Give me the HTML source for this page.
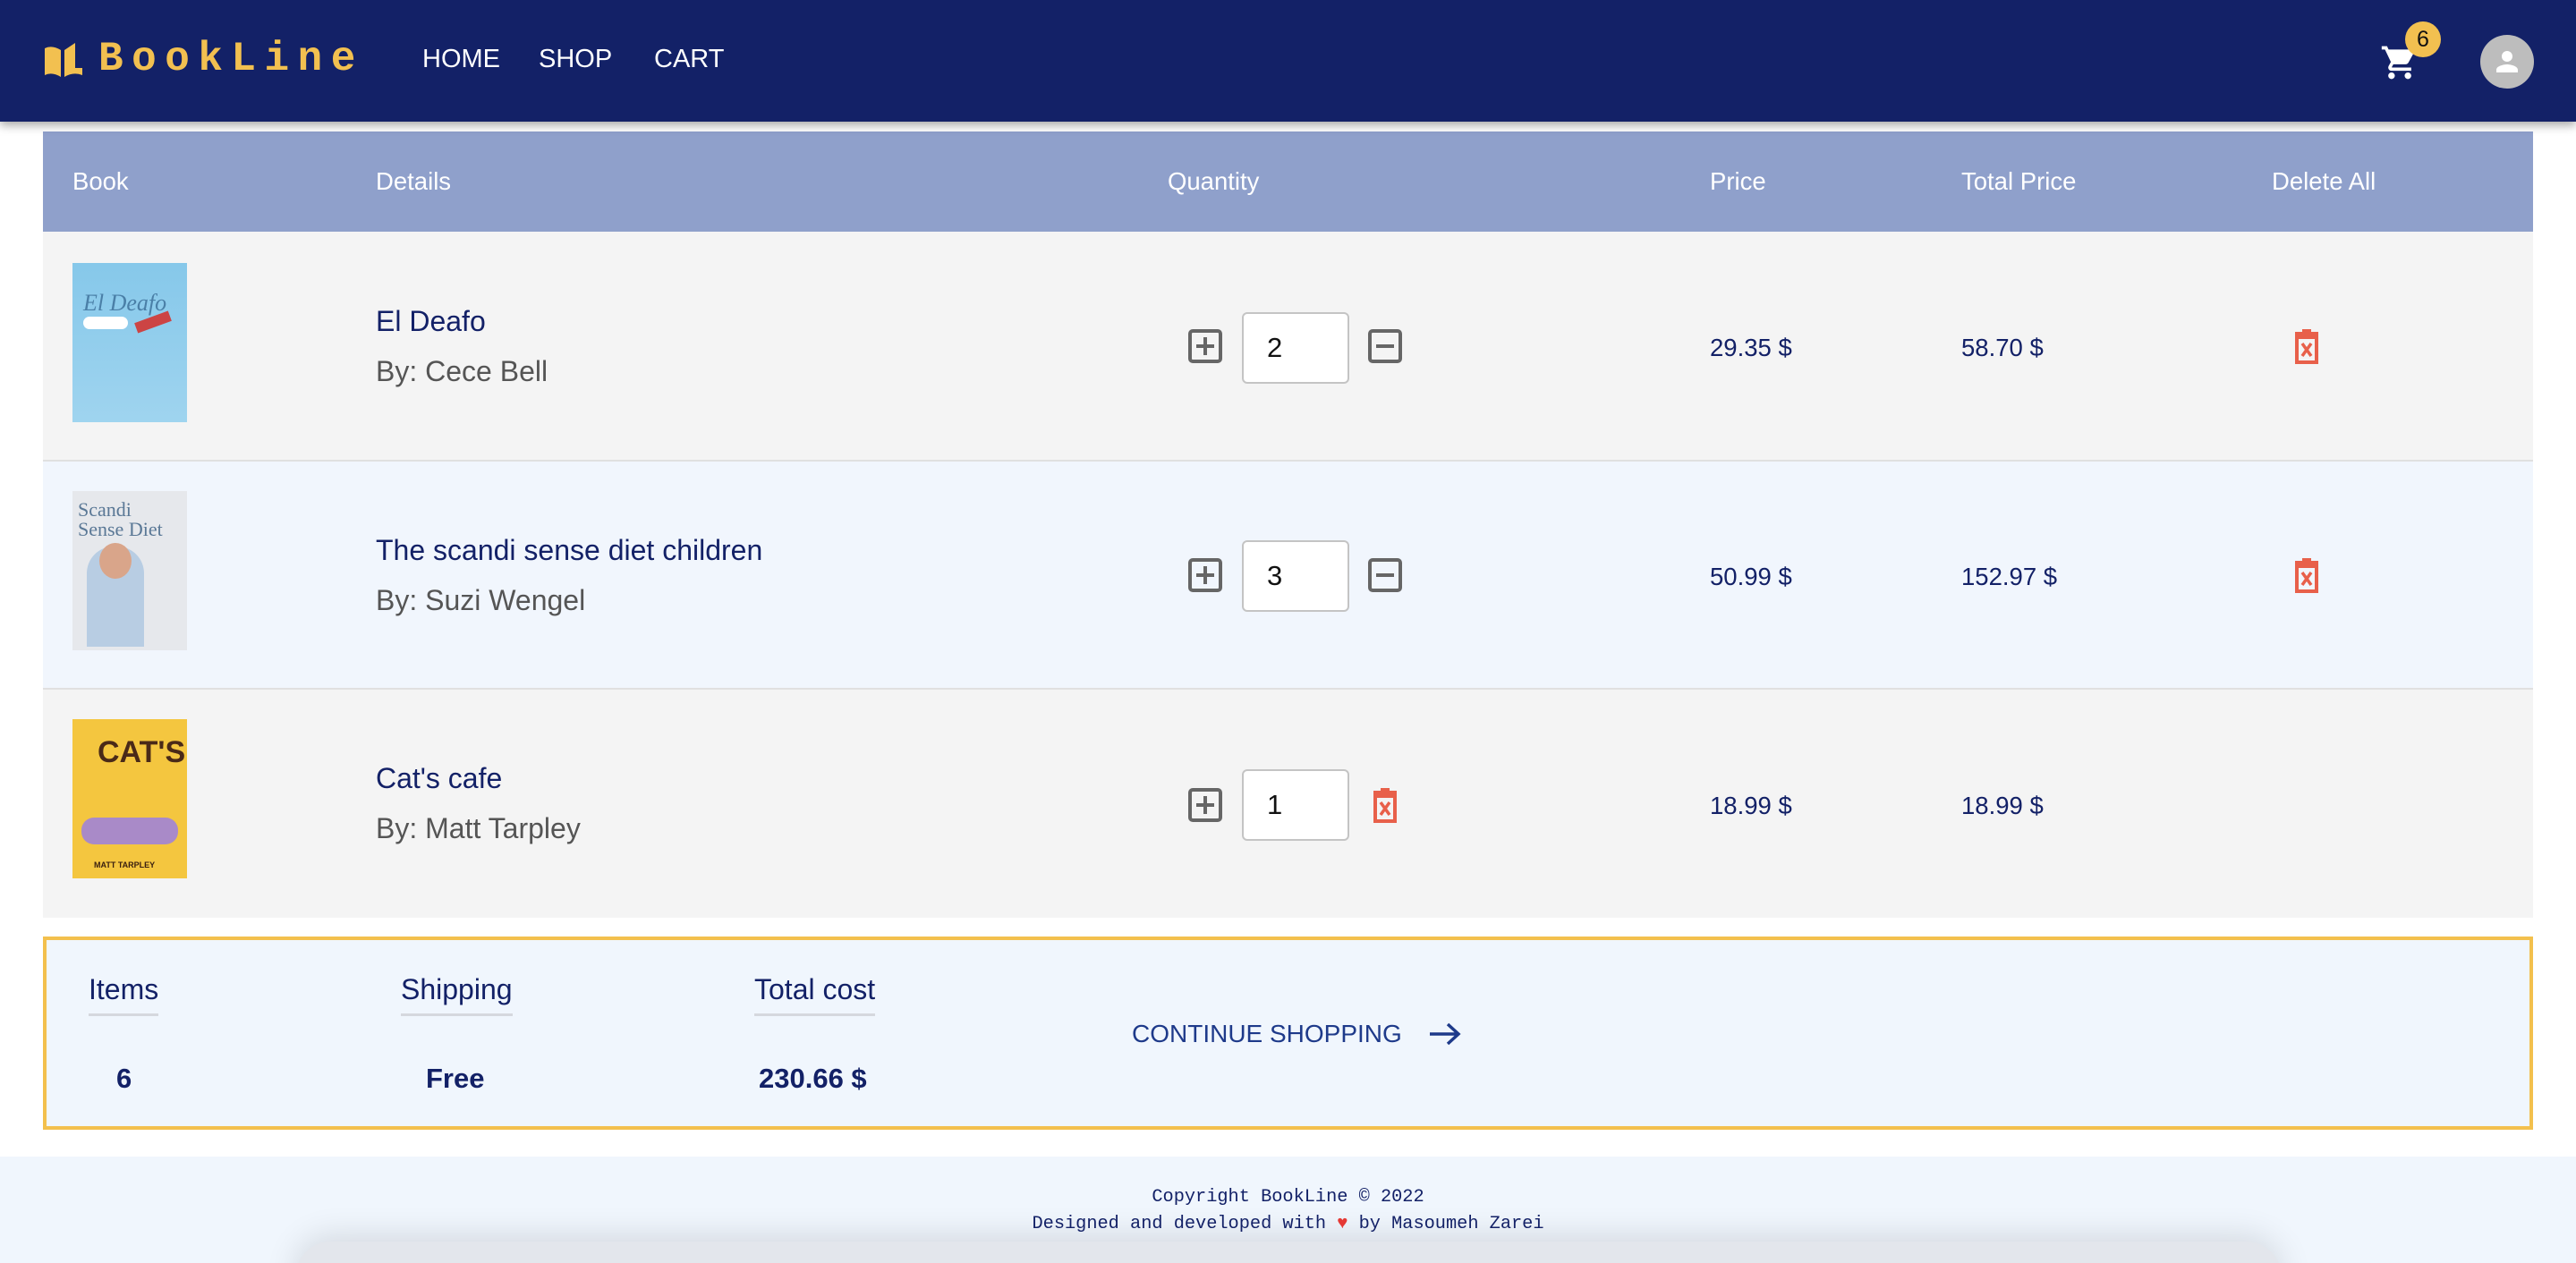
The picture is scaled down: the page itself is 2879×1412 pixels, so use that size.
<!DOCTYPE html>
<html><head><meta charset="utf-8"><style>
*{margin:0;padding:0;box-sizing:border-box}
html,body{width:2879px;height:1412px;overflow:hidden}
body{background:#fff;font-family:"Liberation Sans",sans-serif;position:relative}
.abs{position:absolute}
.nav{left:0;top:0;width:2879px;height:136px;background:#132167;box-shadow:0 4px 10px rgba(0,0,0,.35);z-index:2}
.logo{left:110px;top:40px;font-family:"Liberation Mono",monospace;font-weight:bold;font-size:46px;color:#f2c050;letter-spacing:9.5px}
.link{top:50px;color:#fff;font-size:29px}
.hdr{left:48px;top:147px;width:2783px;height:112px;background:#8fa0cb}
.hdr span{position:absolute;top:40px;color:#fff;font-size:27.5px}
.row{left:48px;width:2783px;border-bottom:2px solid #e0e0e0}
.title{font-size:32px;color:#132167}
.auth{font-size:32px;color:#555}
.price{font-size:27.5px;color:#132167}
.qin{width:120px;height:80px;border:2px solid #c4c4c4;border-radius:6px;background:#fff;font-size:31px;padding:20px 0 0 26px;color:#111}
.sum{left:48px;top:1047px;width:2783px;height:216px;border:4px solid #f3c04d;background:#f0f6fd}
.lab{font-size:32px;color:#132167;top:1088px;padding-bottom:8px;border-bottom:3px solid #d5d8de}
.val{font-size:31px;font-weight:bold;color:#132167;top:1188px}
.foot{left:0;top:1293px;width:2879px;height:119px;background:#f0f6fd;text-align:center;font-family:"Liberation Mono",monospace;font-size:20.3px;color:#132167;overflow:hidden}
</style></head><body>
<div class="abs nav">
 <svg class="abs" style="left:48px;top:46px" width="46" height="42" viewBox="0 0 46 42"><path d="M2 8 Q10 4 20 10 L20 40 Q10 34 2 38Z" fill="#f2c050"/><path d="M24 10 L36 2 L36 30 L44 30 L44 38 Q34 34 24 40Z" fill="#f2c050"/></svg>
 <div class="abs logo">BookLine</div>
 <div class="abs link" style="left:472px">HOME</div>
 <div class="abs link" style="left:602px">SHOP</div>
 <div class="abs link" style="left:731px">CART</div>
 <svg class="abs" style="left:2660px;top:48px" width="44" height="44" viewBox="0 0 24 24"><path fill="#fff" d="M7 18c-1.1 0-2 .9-2 2s.9 2 2 2 2-.9 2-2-.9-2-2-2zM1 2v2h2l3.6 7.59-1.35 2.450c-.16.28-.25.61-.25.96 0 1.1.9 2 2 2h12v-2H7.42c-.14 0-.25-.11-.25-.25l.03-.12.9-1.63h7.45c.75 0 1.41-.41 1.750-1.03l3.58-6.49A1 1 0 0 0 20 4H5.21l-.94-2H1zm16 16c-1.1 0-2 .9-2 2s.9 2 2 2 2-.9 2-2-.9-2-2-2z"/></svg>
 <div class="abs" style="left:2688px;top:24px;width:40px;height:40px;border-radius:50%;background:#f2c050;color:#111;font-size:25px;text-align:center;line-height:40px">6</div>
 <div class="abs" style="left:2772px;top:39px;width:60px;height:60px;border-radius:50%;background:#bdbdbd"></div>
 <svg class="abs" style="left:2784px;top:51px" width="36" height="36" viewBox="0 0 24 24"><path fill="#fff" d="M12 12c2.2 0 4-1.8 4-4s-1.8-4-4-4-4 1.8-4 4 1.8 4 4 4zm0 2c-2.7 0-8 1.3-8 4v2h16v-2c0-2.7-5.3-4-8-4z"/></svg>
</div>
<div class="abs hdr"><span style="left:33px">Book</span><span style="left:372px">Details</span><span style="left:1257px">Quantity</span><span style="left:1863px">Price</span><span style="left:2144px">Total Price</span><span style="left:2491px">Delete All</span></div>

<div class="abs row" style="top:259px;height:257px;background:#f4f4f4"></div>
<div class="abs row" style="top:516px;height:255px;background:#f1f6fd"></div>
<div class="abs row" style="top:771px;height:255px;background:#f4f4f4;border-bottom:none"></div>

<div class="abs" style="left:81px;top:294px;width:128px;height:178px;background:linear-gradient(#86c8ea,#9fd4ef)"><div class="abs" style="left:12px;top:60px;width:50px;height:14px;background:#fff;border-radius:8px"></div><div class="abs" style="left:70px;top:60px;width:40px;height:12px;background:#c44;transform:rotate(-20deg)"></div><div class="abs" style="left:12px;top:30px;font-family:'Liberation Serif',serif;font-style:italic;color:#4a7fa7;font-size:26px">El Deafo</div></div>
<div class="abs" style="left:81px;top:549px;width:128px;height:178px;background:#e6e8ec"><div class="abs" style="left:6px;top:10px;font-family:'Liberation Serif',serif;color:#5a7896;font-size:22px;line-height:22px">Scandi<br>Sense Diet</div><div class="abs" style="left:16px;top:62px;width:64px;height:112px;background:#b8cde3;border-radius:30px 30px 0 0"></div><div class="abs" style="left:30px;top:58px;width:36px;height:40px;background:#d9a58a;border-radius:50%"></div></div>
<div class="abs" style="left:81px;top:804px;width:128px;height:178px;background:#f4c63f"><div class="abs" style="left:28px;top:18px;font-weight:bold;color:#4a2a18;font-size:34px">CAT'S</div><div class="abs" style="left:10px;top:110px;width:108px;height:30px;background:#a98ac8;border-radius:14px"></div><div class="abs" style="left:24px;top:158px;font-weight:bold;color:#3a2010;font-size:9px">MATT TARPLEY</div></div>

<div class="abs title" style="left:420px;top:341px">El Deafo</div><div class="abs auth" style="left:420px;top:397px">By: Cece Bell</div>
<div class="abs title" style="left:420px;top:597px">The scandi sense diet children</div><div class="abs auth" style="left:420px;top:653px">By: Suzi Wengel</div>
<div class="abs title" style="left:420px;top:852px">Cat's cafe</div><div class="abs auth" style="left:420px;top:908px">By: Matt Tarpley</div>

<svg width="0" height="0" style="position:absolute"><defs>
<symbol id="pl" viewBox="0 0 40 40"><rect x="3" y="3" width="34" height="34" rx="3" fill="none" stroke="#666" stroke-width="4"/><path d="M20 10V30M10 20H30" stroke="#666" stroke-width="4"/></symbol>
<symbol id="mi" viewBox="0 0 40 40"><rect x="3" y="3" width="34" height="34" rx="3" fill="none" stroke="#666" stroke-width="4"/><path d="M10 20H30" stroke="#666" stroke-width="4"/></symbol>
<symbol id="tr" viewBox="0 0 28 40"><rect x="1" y="4" width="26" height="4" fill="#e8604a"/><rect x="9" y="1" width="10" height="4" fill="#e8604a"/><rect x="3" y="10" width="22" height="28" fill="none" stroke="#e8604a" stroke-width="4"/><path d="M9 17L19 31M19 17L9 31" stroke="#e8604a" stroke-width="3.5"/></symbol>
</defs></svg>
<svg class="abs" style="left:1327px;top:367px" width="40" height="40"><use href="#pl"/></svg>
<div class="abs qin" style="left:1388px;top:349px">2</div>
<svg class="abs" style="left:1528px;top:367px" width="40" height="40"><use href="#mi"/></svg>
<svg class="abs" style="left:1327px;top:623px" width="40" height="40"><use href="#pl"/></svg>
<div class="abs qin" style="left:1388px;top:604px">3</div>
<svg class="abs" style="left:1528px;top:623px" width="40" height="40"><use href="#mi"/></svg>
<svg class="abs" style="left:1327px;top:880px" width="40" height="40"><use href="#pl"/></svg>
<div class="abs qin" style="left:1388px;top:860px">1</div>
<svg class="abs" style="left:1534px;top:880px" width="28" height="40"><use href="#tr"/></svg>

<div class="abs price" style="left:1911px;top:373px">29.35 $</div><div class="abs price" style="left:2192px;top:373px">58.70 $</div>
<div class="abs price" style="left:1911px;top:629px">50.99 $</div><div class="abs price" style="left:2192px;top:629px">152.97 $</div>
<div class="abs price" style="left:1911px;top:885px">18.99 $</div><div class="abs price" style="left:2192px;top:885px">18.99 $</div>
<svg class="abs" style="left:2564px;top:367px" width="28" height="40"><use href="#tr"/></svg>
<svg class="abs" style="left:2564px;top:623px" width="28" height="40"><use href="#tr"/></svg>

<div class="abs sum"></div>
<div class="abs lab" style="left:99px">Items</div>
<div class="abs lab" style="left:448px">Shipping</div>
<div class="abs lab" style="left:843px">Total cost</div>
<div class="abs val" style="left:130px">6</div>
<div class="abs val" style="left:476px">Free</div>
<div class="abs val" style="left:848px">230.66 $</div>
<div class="abs" style="left:1265px;top:1140px;font-size:28px;color:#1e3a8a">CONTINUE SHOPPING</div>
<svg class="abs" style="left:1596px;top:1140px" width="38" height="32" viewBox="0 0 38 32"><path d="M2 16H34M22 5L34 16L22 27" fill="none" stroke="#1e3a8a" stroke-width="3.5"/></svg>

<div class="abs foot"><div class="abs" style="left:330px;top:95px;width:2220px;height:80px;box-shadow:0 -6px 36px rgba(0,0,0,.12);border-radius:40px;background:#e3e6ec"></div>
<div style="position:relative;padding-top:31px;line-height:30px">Copyright BookLine © 2022<br>Designed and developed with <span style="color:#e53935">♥</span> by Masoumeh Zarei</div></div>
</body></html>
